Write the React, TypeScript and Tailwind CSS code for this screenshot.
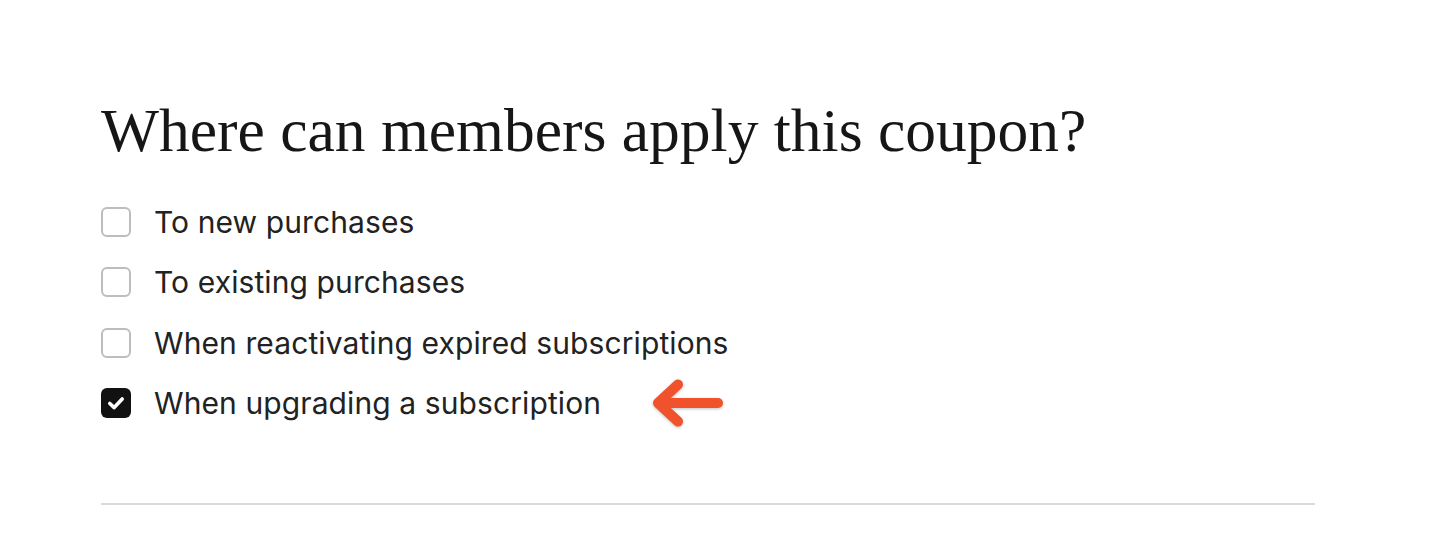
import React from "react";

const options = [
  { label: "To new purchases", checked: false },
  { label: "To existing purchases", checked: false },
  { label: "When reactivating expired subscriptions", checked: false },
  { label: "When upgrading a subscription", checked: true, highlight: true },
];

function CheckBox({ checked }: { checked: boolean }) {
  if (checked) {
    return (
      <span className="flex h-[30px] w-[30px] shrink-0 items-center justify-center rounded-[6px] bg-[#111111]">
        <svg width="20" height="20" viewBox="0 0 20 20" fill="none">
          <path
            d="M3.8 10.5 L8.2 14.6 L16.2 6"
            stroke="#ffffff"
            strokeWidth="3.6"
            strokeLinecap="round"
            strokeLinejoin="round"
          />
        </svg>
      </span>
    );
  }
  return (
    <span className="block h-[30px] w-[30px] shrink-0 rounded-[6px] border-2 border-[#bdbdbd] bg-white" />
  );
}

function PointerArrow() {
  return (
    <svg
      width="74"
      height="54"
      viewBox="0 0 74 54"
      fill="none"
      className="ml-[49px] drop-shadow-[0_1px_1.5px_rgba(0,0,0,0.25)]"
    >
      <path
        d="M68 27 H10 M28 8.5 L8 27 L28 45.5"
        stroke="#F0532B"
        strokeWidth="10"
        strokeLinecap="round"
        strokeLinejoin="round"
      />
    </svg>
  );
}

export default function App() {
  return (
    <div className="min-h-[559px] w-full bg-white pl-[101px] pr-[125px] pt-[100px]">
      <h1
        className="text-[61.5px] leading-none font-normal text-[#161616]"
        style={{ fontFamily: '"Liberation Serif", serif' }}
      >
        Where can members apply this coupon?
      </h1>
      <ul
        className="mt-[45px] flex flex-col gap-[30.5px]"
        style={{ fontFamily: 'Inter, "Liberation Sans", sans-serif' }}
      >
        {options.map((o) => (
          <li key={o.label} className="flex h-[30px] items-center">
            <CheckBox checked={o.checked} />
            <span className="ml-[23px] text-[30px] leading-none tracking-[0.1px] text-[#222222]">
              {o.label}
            </span>
            {o.highlight && <PointerArrow />}
          </li>
        ))}
      </ul>
      <div className="mt-[85px] h-[2px] w-[1214px] bg-[#dadada]" />
    </div>
  );
}
